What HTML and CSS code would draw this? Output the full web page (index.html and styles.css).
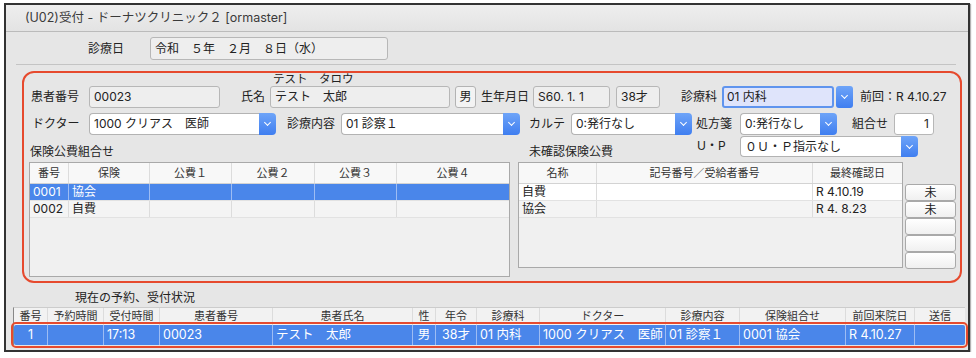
FILE: index.html
```html
<!DOCTYPE html>
<html lang="ja">

<head>
    <meta charset="UTF-8">
    <meta name="viewport" content="width=device-width, initial-scale=1.0">
    <title>受付</title>
    <link rel="stylesheet" href="styles.css">
</head>

<body>
    <div class="window">
        <div class="titlebar">(U02)受付 - ドーナツクリニック２ [ormaster]</div>
        <div class="content">
            <div class="date-row">
                <span class="date-lbl">診療日</span>
                <div class="field date-field">令和　５年　２月　８日（水）</div>
            </div>
            <div class="sep"></div>

            <div class="panel">
                <div class="kana">テスト　タロウ</div>
                <!-- 患者 -->
                <div class="row">
                    <span class="lbl l-ptno">患者番号</span>
                    <div class="field f-ptno">00023</div>
                    <span class="lbl lbl-r l-name">氏名</span>
                    <div class="field f-name">テスト　太郎</div>
                    <div class="btn b-sex">男</div>
                    <span class="lbl l-birth">生年月日</span>
                    <div class="field f-birth">S60. 1. 1</div>
                    <div class="field f-age">38才</div>
                    <span class="lbl lbl-r l-dept">診療科</span>
                    <div class="select s-dept focus"><span class="val">01 内科</span><span class="dd"></span></div>
                    <span class="lbl prev">前回：R 4.10.27</span>
                </div>
                <!-- 診療 -->
                <div class="row row2">
                    <span class="lbl l-doc">ドクター</span>
                    <div class="select s-doc"><span class="val">1000 クリアス　医師</span><span class="dd"></span></div>
                    <span class="lbl lbl-r l-kind">診療内容</span>
                    <div class="select s-kind"><span class="val">01 診察１</span><span class="dd"></span></div>
                    <span class="lbl lbl-r l-karte">カルテ</span>
                    <div class="select s-karte"><span class="val">0:発行なし</span><span class="dd"></span></div>
                    <span class="lbl l-rx">処方箋</span>
                    <div class="select s-rx"><span class="val">0:発行なし</span><span class="dd"></span></div>
                    <span class="lbl lbl-r l-comb">組合せ</span>
                    <div class="field f-comb">1</div>
                </div>
                <div class="row row3">
                    <span class="lbl sub l-hoken">保険公費組合せ</span>
                    <span class="lbl sub l-unconf">未確認保険公費</span>
                    <span class="lbl l-up">U・P</span>
                    <div class="select s-up"><span class="val">０Ｕ・Ｐ指示なし</span><span class="dd"></span></div>
                </div>

                <div class="tables">
                    <div class="grid g-comb">
                        <div class="tr th">
                            <div class="c">番号</div>
                            <div class="c">保険</div>
                            <div class="c">公費１</div>
                            <div class="c">公費２</div>
                            <div class="c">公費３</div>
                            <div class="c">公費４</div>
                        </div>
                        <div class="tr sel">
                            <div class="c">0001</div>
                            <div class="c">協会</div>
                            <div class="c"></div>
                            <div class="c"></div>
                            <div class="c"></div>
                            <div class="c"></div>
                        </div>
                        <div class="tr alt">
                            <div class="c">0002</div>
                            <div class="c">自費</div>
                            <div class="c"></div>
                            <div class="c"></div>
                            <div class="c"></div>
                            <div class="c"></div>
                        </div>
                    </div>

                    <div class="grid g-unconf">
                        <div class="tr th">
                            <div class="c">名称</div>
                            <div class="c">記号番号／受給者番号</div>
                            <div class="c">最終確認日</div>
                        </div>
                        <div class="tr white">
                            <div class="c">自費</div>
                            <div class="c"></div>
                            <div class="c">R 4.10.19</div>
                        </div>
                        <div class="tr alt">
                            <div class="c">協会</div>
                            <div class="c"></div>
                            <div class="c">R 4. 8.23</div>
                        </div>
                    </div>

                    <div class="side-btns">
                        <div class="sbtn">未</div>
                        <div class="sbtn">未</div>
                        <div class="sbtn"></div>
                        <div class="sbtn"></div>
                        <div class="sbtn"></div>
                    </div>
                </div>
            </div>

            <div class="status-lbl">現在の予約、受付状況</div>
            <div class="status">
                <div class="tr th">
                    <div class="c">番号</div>
                    <div class="c">予約時間</div>
                    <div class="c">受付時間</div>
                    <div class="c">患者番号</div>
                    <div class="c">患者氏名</div>
                    <div class="c">性</div>
                    <div class="c">年令</div>
                    <div class="c">診療科</div>
                    <div class="c">ドクター</div>
                    <div class="c">診療内容</div>
                    <div class="c">保険組合せ</div>
                    <div class="c">前回来院日</div>
                    <div class="c">送信</div>
                </div>
                <div class="tr sel current">
                    <div class="c mid">1</div>
                    <div class="c"></div>
                    <div class="c">17:13</div>
                    <div class="c">00023</div>
                    <div class="c">テスト　太郎</div>
                    <div class="c mid">男</div>
                    <div class="c mid">38才</div>
                    <div class="c">01 内科</div>
                    <div class="c">1000 クリアス　医師</div>
                    <div class="c">01 診察１</div>
                    <div class="c">0001 協会</div>
                    <div class="c">R 4.10.27</div>
                    <div class="c"></div>
                </div>
            </div>
        </div>
    </div>
</body>

</html>
```

FILE: styles.css
```css
* {
    margin: 0;
    padding: 0;
    box-sizing: border-box;
}

body {
    background-color: #fff;
    padding: 3px 0 0 4px;
    font-family: Inter, "Noto Sans CJK JP", sans-serif;
    font-size: 12px;
    color: #222;
}

.window {
    width: 966px;
    border: 2px solid #333;
    background-color: #e6e6e6;
    box-shadow: 1px 1px 1px rgba(0, 0, 0, .3);
}

.titlebar {
    height: 27px;
    line-height: 26px;
    padding-left: 19px;
    border-bottom: 1px solid #bbb;
    background: linear-gradient(#eeeeee, #e3e3e3);
    color: #3a3a3a;
    font-size: 12.5px;
}

.content {
    padding-bottom: 5px;
}

/* 診療日 */
.date-row {
    display: flex;
    height: 23px;
    margin-top: 5px;
    padding-left: 82px;
}

.date-lbl {
    width: 62px;
    line-height: 23px;
}

.field {
    background-color: #eeeeee;
    border: 1px solid #b7b7b7;
    border-radius: 3px;
    padding: 0 4px;
    line-height: 20px;
    white-space: nowrap;
}

.date-field {
    width: 238px;
    line-height: 21px;
}

.sep {
    margin: 4px 12px 0 10px;
    height: 1px;
    background-color: #c4c4c4;
}

/* 赤枠 */
.panel {
    margin: 6px 6px 0 16px;
    height: 212px;
    border: 2px solid #e64a2e;
    border-radius: 12px;
}

.kana {
    height: 13px;
    line-height: 12px;
    padding-left: 249px;
    font-size: 11.5px;
}

.row {
    display: flex;
    height: 22px;
}

.row2 {
    margin-top: 5px;
}

.row3 {
    margin-top: 1px;
}

.lbl {
    line-height: 22px;
    white-space: nowrap;
}

.lbl-r {
    text-align: right;
    padding-right: 5px;
}

.lbl.sub {
    align-self: flex-end;
    line-height: 12px;
}

.l-ptno { width: 65px; padding-left: 7px; }
.f-ptno { width: 131px; }
.l-name { width: 50px; }
.f-name { width: 180px; }
.l-birth { width: 57px; padding-left: 5px; }
.f-birth { width: 77px; }
.f-age { width: 44px; margin-left: 6px; }
.l-dept { width: 62px; }
.s-dept { width: 131px; }
.prev { margin-left: 7px; }

.l-doc { width: 65px; padding-left: 8px; }
.s-doc { width: 187px; }
.l-kind { width: 65px; padding-right: 6px; }
.s-kind { width: 179px; }
.l-karte { width: 51px; padding-right: 6px; }
.s-karte { width: 121px; }
.l-rx { width: 48px; padding-left: 4px; }
.s-rx { width: 97px; }
.l-comb { width: 57px; padding-right: 6px; }
.f-comb { width: 40px; text-align: right; background-color: #fff; }

.l-hoken { width: 505px; padding-left: 6px; }
.l-unconf { width: 168px; }
.l-up { width: 43px; line-height: 20px; }
.s-up { width: 178px; height: 21px; }

.btn {
    border: 1px solid #b3b3b3;
    border-radius: 3px;
    background-color: #f3f3f3;
    text-align: center;
    line-height: 20px;
}

.b-sex {
    width: 21px;
    margin-left: 5px;
}

/* プルダウン */
.select {
    display: flex;
}

.select .val {
    flex: 1;
    background-color: #fff;
    border: 1px solid #b3b3b3;
    border-right: none;
    border-radius: 4px 0 0 4px;
    padding-left: 4px;
    line-height: 20px;
    white-space: nowrap;
    overflow: hidden;
}

.select .dd {
    width: 17px;
    display: flex;
    align-items: center;
    justify-content: center;
    border-radius: 0 4px 4px 0;
    background: linear-gradient(#6ea4f8, #3f7ef0);
}

.select .dd::after {
    content: "";
    width: 4px;
    height: 4px;
    margin-top: -3px;
    border: solid #fff;
    border-width: 0 1.5px 1.5px 0;
    transform: rotate(45deg);
}

.select.focus .val {
    background-color: #dfe4fb;
    border: 2px solid #5f94ee;
    border-radius: 3px;
    line-height: 18px;
    padding-left: 3px;
}

.select.focus .dd {
    margin-left: 2px;
    border-radius: 3px;
}

/* 表 */
.tables {
    display: flex;
    margin-top: 4px;
    padding-left: 5px;
}

.grid {
    border: 1px solid #a9a9a9;
    background-color: #f0f0f0;
}

.tr {
    display: grid;
    height: 17px;
    line-height: 16px;
    border-bottom: 1px solid #e2e2e2;
    white-space: nowrap;
}

.tr .c {
    padding-left: 3px;
    border-right: 1px solid #dcdcdc;
    overflow: hidden;
}

.tr .c:last-child {
    border-right: none;
}

.tr.th {
    height: 21px;
    line-height: 20px;
    background-color: #f8f8f8;
    border-bottom: 1px solid #d3d3d3;
    font-size: 11px;
    color: #333;
}

.tr.th .c {
    text-align: center;
    padding-left: 0;
}

.tr.sel {
    background-color: #4a86ea;
    color: #fff;
}

.tr.sel .c {
    border-right-color: #9dbcf3;
}

.tr.alt {
    background-color: #f4f4f4;
}

.tr.white {
    background-color: #fff;
}

.g-comb {
    width: 481px;
    height: 115px;
}

.g-comb .tr {
    grid-template-columns: 39px 81px 82px 83px 82px 1fr;
}

.g-unconf {
    width: 385px;
    height: 106px;
    margin-left: 8px;
}

.g-unconf .tr {
    grid-template-columns: 78px 216px 1fr;
}

.side-btns {
    width: 51px;
    margin: 22px 0 0 2px;
}

.sbtn {
    height: 17px;
    line-height: 15px;
    text-align: center;
    border: 1px solid #a9a9a9;
    border-radius: 3px;
    background: linear-gradient(#ffffff, #f0f0f0);
}

/* 受付状況 */
.status-lbl {
    margin-top: 8px;
    line-height: 14px;
    padding-left: 69px;
}

.status {
    width: 952px;
    margin: 2px 0 0 7px;
    border-left: 1px solid #888;
    border-top: 1px solid #ccc;
}

.status .tr {
    grid-template-columns: 34px 56px 56px 113px 140px 23px 41px 63px 126px 74px 106px 69px 50px;
}

.status .tr.th {
    height: 17px;
    line-height: 17px;
    background-color: #f2f2f2;
    border-bottom: none;
}

.status .tr.current {
    height: 20px;
    line-height: 20px;
    border-bottom: none;
    font-size: 12.5px;
    outline: 2px solid #e64a2e;
    outline-offset: 1px;
    border-radius: 2px;
}

.status .c.mid {
    text-align: center;
    padding-left: 0;
}
```
